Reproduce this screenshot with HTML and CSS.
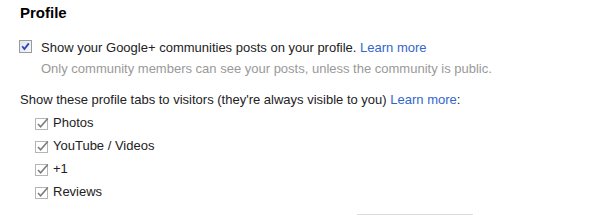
FILE: index.html
```html
<!DOCTYPE html>
<html lang="en">

<head>
    <meta charset="UTF-8">
    <title>Profile</title>
    <link rel="stylesheet" href="styles.css">
</head>

<body>
    <div class="section">
        <h2>Profile</h2>

        <div class="option">
            <span class="check-main">
                <svg width="13" height="13" viewBox="0 0 13 13">
                    <defs>
                        <linearGradient id="cbg" x1="0" y1="0" x2="1" y2="1">
                            <stop offset="0" stop-color="#dfe3ec" />
                            <stop offset="1" stop-color="#f7f8fb" />
                        </linearGradient>
                    </defs>
                    <rect x="0.5" y="0.5" width="12" height="12" fill="url(#cbg)" stroke="#9a9a9a" />
                    <path d="M3.2 6.3 L5.4 9 L9.8 3.4" fill="none" stroke="#2a45b8" stroke-width="1.8" />
                </svg>
            </span>
            <div class="option-text">
                <div>Show your Google+ communities posts on your profile. <a href="#">Learn more</a></div>
                <div class="note">Only community members can see your posts, unless the community is public.</div>
            </div>
        </div>

        <p class="tabs-title">Show these profile tabs to visitors (they're always visible to you) <a href="#">Learn more</a>:</p>

        <ul class="tabs">
            <li><span class="check-small"><svg width="15" height="14" viewBox="0 0 15 14"><rect x="0.5" y="2.5" width="12" height="11" fill="#fff" stroke="#b5b5b5" /><path d="M3 8 L5.6 10.8 L12.8 2.4" fill="none" stroke="#7d7d7d" stroke-width="1.6" /></svg></span>Photos</li>
            <li><span class="check-small"><svg width="15" height="14" viewBox="0 0 15 14"><rect x="0.5" y="2.5" width="12" height="11" fill="#fff" stroke="#b5b5b5" /><path d="M3 8 L5.6 10.8 L12.8 2.4" fill="none" stroke="#7d7d7d" stroke-width="1.6" /></svg></span>YouTube / Videos</li>
            <li><span class="check-small"><svg width="15" height="14" viewBox="0 0 15 14"><rect x="0.5" y="2.5" width="12" height="11" fill="#fff" stroke="#b5b5b5" /><path d="M3 8 L5.6 10.8 L12.8 2.4" fill="none" stroke="#7d7d7d" stroke-width="1.6" /></svg></span>+1</li>
            <li><span class="check-small"><svg width="15" height="14" viewBox="0 0 15 14"><rect x="0.5" y="2.5" width="12" height="11" fill="#fff" stroke="#b5b5b5" /><path d="M3 8 L5.6 10.8 L12.8 2.4" fill="none" stroke="#7d7d7d" stroke-width="1.6" /></svg></span>Reviews</li>
        </ul>

        <div class="save-button"></div>
    </div>
</body>

</html>
```

FILE: styles.css
```css
html,
body {
    overflow: hidden;
}

body {
    font-family: "Liberation Sans", Arial, sans-serif;
    font-size: 13px;
    color: #222;
    background-color: white;
    margin: 0;
}

.section {
    padding: 4px 0 0 20px;
}

h2 {
    margin: 0;
    font-size: 15px;
    line-height: 17px;
    font-weight: bold;
    color: #000;
}

a {
    color: #36c;
    text-decoration: none;
}

.option {
    display: flex;
    align-items: flex-start;
    margin-top: 17px;
}

.check-main {
    display: flex;
    margin: 2px 9px 0 -1px;
}

.option-text {
    line-height: 20px;
}

.note {
    margin-top: 1px;
    color: #999;
}

.tabs-title {
    margin: 11px 0 0;
    line-height: 20px;
}

.tabs {
    list-style: none;
    margin: 1px 0 0;
    padding: 0 0 0 15px;
}

.tabs li {
    display: flex;
    align-items: center;
    height: 23px;
}

.check-small {
    display: flex;
    margin-right: 3px;
}

.save-button {
    margin: 11px 0 0 337px;
    width: 116px;
    height: 0;
    border-top: 1px solid #dcdcdc;
}
```
